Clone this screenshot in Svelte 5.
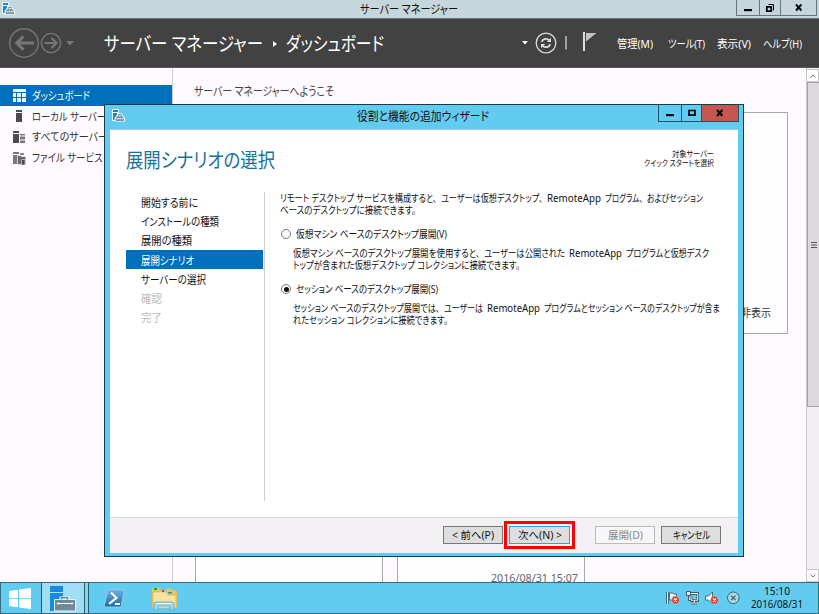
<script>
  const nav = [
    ['ダッシュボード', 58], ['ローカル サーバー', 74], ['すべてのサーバー', 76], ['ファイル サービスと', 79]
  ];
  const steps = [
    ['開始する前に', 57, ''], ['インストールの種類', 78, ''], ['展開の種類', 51, ''],
    ['展開シナリオ', 53, 'active'], ['サーバーの選択', 65, ''], ['確認', 21, 'off'], ['完了', 21, 'off']
  ];
  const menus = [['管理(M)', 36, 15], ['ツール(T)', 37, 12], ['表示(V)', 34, 12], ['ヘルプ(H)', 39, 0]];

  // Condense a run of text horizontally to its column width.
  function fit(node, width) {
    const natural = node.getBoundingClientRect().width;
    node.style.transform = `scaleX(${width / natural})`;
  }
</script>

{#snippet t(text, w)}<span class="fit" style:width="{w}px"><span use:fit={w}>{text}</span></span>{/snippet}

{#snippet serverIcon()}
  <svg width="13" height="13" viewBox="0 0 13 13">
    <path d="M0 0h7v12H0z" fill="#eef8fc" /><path d="M1 1h5v2H1zM1 4h4v7H1z" fill="#1e86cf" />
    <path d="M2.5 12.5V9l2.3-3L6 4.2h3.6L10.8 6 13 9v3.5z" fill="#f2fafd" />
    <path d="M6.4 6.8V5.6h3v1.2" fill="none" stroke="#6b8c9c" />
    <path d="M5.4 7h5l1.6 2.3V12H3.6V9.3z" fill="#7d9bab" /><path d="M3.8 9.7h8" stroke="#e6f1f5" stroke-width=".8" />
  </svg>
{/snippet}

{#snippet errorBadge()}
  <circle cx="9.5" cy="9" r="3.9" fill="#d93a32" stroke="#f3c3bd" stroke-width=".5" />
  <path d="M8 7.5l3 3m0-3l-3 3" stroke="#fff" stroke-width="1.3" />
{/snippet}

<div class="screen">
  <header class="titlebar">
    <div class="tb-icon">{@render serverIcon()}</div>
    <div class="tb-title">{@render t('サーバー マネージャー', 98)}</div>
    <div class="winbtns">
      <span style:width="22px"><svg width="10" height="10"><path d="M1 6h8v2.2H1z" /></svg></span>
      <span style:width="21px"><svg width="10" height="10" fill="none" stroke="#000"><path d="M1.8 3.8h4.4v4.4H1.8z" stroke-width="1.8" /><path d="M3.5 1.5h5v6" /></svg></span>
      <span style:width="36px"><svg width="10" height="10"><path d="M2 1.5l5.4 6M7.4 1.5L2 7.5" stroke="#000" stroke-width="1.9" /></svg></span>
    </div>
  </header>

  <div class="topbar">
    <svg class="navs" width="68" height="32" fill="none" stroke="#777">
      <circle cx="16" cy="16" r="14.3" stroke-width="1.4" /><path d="M26 16H9M15.5 9.2L8.8 16l6.7 6.8" stroke-width="3" />
      <circle cx="43" cy="16" r="9.6" stroke-width="1.4" /><path d="M36.5 16H48M43.5 11l5 5-5 5" stroke-width="2.2" />
      <path d="M58 14h8l-4 4.5z" fill="#777" stroke="none" />
    </svg>
    <div class="crumbs">
      {@render t('サーバー マネージャー', 159)}
      <svg width="4" height="6"><path d="M0 0l4 3-4 3z" fill="#fff" /></svg>
      {@render t('ダッシュボード', 98)}
    </div>
    <svg class="tools" width="78" height="32" fill="none">
      <path d="M1 14h6l-3 3.6z" fill="#fff" />
      <circle cx="25" cy="16" r="9.8" stroke="#ddd" stroke-width="1.3" />
      <path d="M20.8 14.8c1-3.2 5-4 7.6-1.4M29.2 17.2c-1 3.2-5 4-7.6 1.4" stroke="#ddd" stroke-width="1.9" />
      <path d="M30 10.8V15h-4.2zM20 21.2V17h4.2z" fill="#ddd" />
      <path d="M45 9v13.5" stroke="#bbb" stroke-width="1.6" />
      <path d="M62 5h2v19h-2z" fill="#ddd" /><path d="M65 6h10.5L65 14.5z" fill="#c4c4c4" />
    </svg>
    <nav class="menus">
      {#each menus as [label, w, gap]}<span style:margin-right="{gap}px">{@render t(label, w)}</span>{/each}
    </nav>
  </div>

  <div class="body">
    <aside>
      {#each nav as [label, w], i}
        <div class="nav-item" class:sel={i === 0}>
          <svg width="14" height="13">
            {#if i === 0}
              <path d="M1 0h13v3H1zM1 4h3v4H1zM1 9h3v4H1zM5 4h4v4H5zM5 9h4v4H5zM10 4h4v4h-4zM10 9h4v4h-4z" fill="#e9f4fc" />
            {:else if i === 1}
              <path d="M4 0h6v2H4zM4 3h6v9H4z" fill="#4b4b4b" />
            {:else}
              <path d="M1 0h6v2H1zM1 3h6v9H1z" fill={i === 2 ? '#4b4b4b' : '#777'} />
              {#if i === 2}<path d="M8 3h5v1.5H8zM8 5.5h5v3H8zM8 9.5h5V12H8z" fill="#777" />
              {:else}<path d="M8 1h4v2H8z" fill="#888" /><path d="M5.5 3.5h3l1 1h4.3v8H5.5z" fill="#666" stroke="#fff" stroke-width=".7" /><path d="M9.5 7.5H13V13H9.5z" fill="#4b4b4b" stroke="#fff" stroke-width=".5" />{/if}
            {/if}
          </svg>
          {@render t(label, w)}
        </div>
      {/each}
    </aside>
    <main>
      <h2>{@render t('サーバー マネージャーへようこそ', 140)}</h2>
      <section class="welcome">{@render t('非表示', 30)}</section>
      <div class="tiles"><div></div><div>{@render t('2016/08/31 15:07', 87)}</div></div>
    </main>
    <div class="scroll">
      <span class="arrow"><svg width="8" height="6"><path d="M1.5 4.5L4 2l2.5 2.5" fill="none" stroke="#777" /></svg></span>
      <span class="thumb"><svg width="6" height="8"><path d="M0 1.5h6M0 4h6M0 6.5h6" stroke="#555" /></svg></span>
      <span class="gap"></span>
      <span class="arrow"><svg width="8" height="6"><path d="M1.5 1.5L4 4l2.5-2.5" fill="none" stroke="#777" /></svg></span>
    </div>
  </div>

  <footer class="taskbar">
    <div class="start"><svg width="22" height="21" fill="#fff"><path d="M0 3l9-1.3v8.5H0zM10 1.5L22 0v10.2H10zM0 11h9v8.3L0 18zM10 11h12v10l-12-1.6z" /></svg></div>
    <div class="running"><svg width="26" height="26">
      <path d="M0 0h13v6H0zM0 7h13v18H0z" fill="#168be0" /><path d="M0 6.5h13" stroke="#a9def4" />
      <path d="M11 14v-2h7v2" fill="none" stroke="#e7f4fa" stroke-width="3" /><path d="M4.5 13.5h21v11.5h-21z" fill="#708996" stroke="#e2f3fa" />
      <path d="M11.5 13.5v-1.7h6v1.7" fill="none" stroke="#708996" stroke-width="1.5" /><path d="M7 17.5h16" stroke="#fff" /><path d="M8.5 16v3l-2-1.5zM21.5 16v3l2-1.5z" fill="#fff" />
    </svg></div>
    <div class="stack"></div>
    <div class="ps"><svg width="23" height="19">
      <defs><linearGradient id="psg" x2="0" y2="1"><stop stop-color="#6fb3dc" /><stop offset="1" stop-color="#1d66a3" /></linearGradient></defs>
      <path d="M5 .7h16.5L18 18H1z" fill="url(#psg)" stroke="#8ecbea" /><path d="M8 3.5l5.5 5.4-7.5 6M12 15h5" fill="none" stroke="#fff" stroke-width="2.1" />
    </svg></div>
    <div class="folder"><svg width="27" height="25">
      <path d="M1 4V1h7l2 2h6V1l10 3v17H1z" fill="#e8c363" /><path d="M2 5h14l1 3h8v13H2z" fill="#f8e49d" stroke="#d4a94c" stroke-width=".6" />
      <path d="M3 1h3v2H3z" fill="#29a33a" /><path d="M11 3h2v2h-2z" fill="#d33" /><path d="M17 5h4v1.5h-4z" fill="#2196d5" />
      <path d="M3 23v-6q0-2 2-2h16q2 0 2 2v6h-4v-4H7v4z" fill="#9ed8ef" stroke="#5ca8ce" stroke-width=".8" /><path d="M5 16.5h16" stroke="#e6f7fd" />
    </svg></div>
    <div class="tray">
      <svg width="15" height="15" fill="none"><path d="M1.5 1v12" stroke="#28434e" stroke-width="2.4" /><path d="M1.5 1v12" stroke="#fff" /><path d="M3.5 2h3l1 1h3v6h-7z" fill="#e5f3f8" stroke="#28434e" stroke-width=".7" />{@render errorBadge()}</svg>
      <svg width="15" height="15" fill="none"><path d="M4.5 2.5h7.3v6.7H5v-5M8.5 9.5v2M5 12h6" stroke="#28434e" stroke-width="2.4" /><path d="M5 2.5h6.8v6.7H5v-5M8.5 9.5v2M5 12h6" stroke="#fff" /><path d="M.5.5h4v4h-4zM2.5 4.5v5H5" fill="#dceff7" stroke="#35515d" stroke-width=".9" /></svg>
      <svg width="15" height="15" fill="none"><path d="M.5 5h3l4-4v12l-4-4h-3z" fill="#eff8fb" stroke="#35515d" stroke-width=".8" />{@render errorBadge()}</svg>
      <svg class="cross" width="15" height="15" fill="none"><circle cx="6.3" cy="6.8" r="5.8" fill="#a9d9e9" stroke="#3e606e" /><path d="M4.1 4.6l4.4 4.4m0-4.4L4.1 9" stroke="#3e606e" stroke-width="1.3" /></svg>
    </div>
    <div class="clock">{@render t('15:10', 26)}{@render t('2016/08/31', 52)}</div>
  </footer>

  <div class="dialog">
    <div class="dlg-title">
      <div class="dlg-icon">{@render serverIcon()}</div>
      <div class="dlg-name">{@render t('役割と機能の追加ウィザード', 132)}</div>
      <div class="dlg-btns">
        <span style:width="22px"><svg width="10" height="10"><path d="M1 6h8v2.2H1z" /></svg></span>
        <span style:width="20px"><svg width="10" height="10"><path d="M2 2.5h6v4.6H2z" fill="none" stroke="#000" stroke-width="1.7" /></svg></span>
        <span class="close" style:width="37px"><svg width="10" height="10"><path d="M2 2l5.4 6M7.4 2L2 8" stroke="#000" stroke-width="1.9" /></svg></span>
      </div>
    </div>
    <div class="client">
      <div class="head">
        <h1>{@render t('展開シナリオの選択', 149)}</h1>
        <div class="dest">{@render t('対象サーバー', 42)}{@render t('クイック スタートを選択', 70)}</div>
      </div>
      <div class="wizard">
        <ul>
          {#each steps as [label, w, state]}<li class={state}>{@render t(label, w)}</li>{/each}
        </ul>
        <div class="content">
          <p>{@render t('リモート デスクトップ サービスを構成すると、', 157)}{@render t('ユーザーは仮想デスクトップ、', 102)}{@render t('RemoteApp', 54)}{@render t('プログラム、', 38)}{@render t('およびセッション', 56)}</p>
          <p>{@render t('ベースのデスクトップに接続できます。', 136)}</p>
          <div class="option first"><i></i>{@render t('仮想マシン ベースのデスクトップ展開(V)', 151)}</div>
          <div class="desc">
            <p>{@render t('仮想マシン ベースのデスクトップ展開を使用すると、', 187)}{@render t('ユーザーは公開された', 81)}{@render t('RemoteApp', 53)}{@render t('プログラムと仮想デスク', 83)}</p>
            <p>{@render t('トップが含まれた仮想デスクトップ コレクションに接続できます。', 227)}</p>
          </div>
          <div class="option"><i class="on"></i>{@render t('セッション ベースのデスクトップ展開(S)', 142)}</div>
          <div class="desc">
            <p>{@render t('セッション ベースのデスクトップ展開では、', 147)}{@render t('ユーザーは', 39)}{@render t('RemoteApp', 53)}{@render t('プログラムとセッション ベースのデスクトップが含ま', 176)}</p>
            <p>{@render t('れたセッション コレクションに接続できます。', 155)}</p>
          </div>
        </div>
      </div>
      <div class="actions">
        <button>{@render t('< 前へ(P)', 42)}</button>
        <div class="mark"><button class="default">{@render t('次へ(N) >', 44)}</button></div>
        <button class="disabled">{@render t('展開(D)', 35)}</button>
        <button>{@render t('キャンセル', 37)}</button>
      </div>
    </div>
  </div>
</div>

<style>
  .screen, .screen * { box-sizing: border-box; }
  .screen { position: relative; width: 819px; height: 614px; overflow: hidden; display: flex; flex-direction: column; background: #fefaff; color: #111; font: 11px/14px "Noto Sans", "Noto Sans CJK JP", sans-serif; font-feature-settings: "palt"; }
  svg { display: block; flex: none; overflow: visible; }
  .fit { display: block; flex: none; white-space: pre; }
  .fit > span { display: inline-block; transform-origin: 0 50%; white-space: pre; }
  h1, h2, p, ul { margin: 0; padding: 0; font-weight: 400; }
  p { display: flex; gap: 4px; height: 12.3px; }

  .titlebar { height: 19px; flex: none; display: flex; background: #c5d6dd; border-bottom: 1px solid #63747b; }
  .tb-icon { width: 360px; padding: 2px 0 0 2px; }
  .tb-title { flex: 1; padding-top: 3px; font-size: 12px; }
  .winbtns { display: flex; height: 16px; border: 1px solid #68777d; border-top: 0; margin-right: 2px; }
  .winbtns span, .dlg-btns span { display: flex; align-items: center; justify-content: center; }
  .winbtns span + span { border-left: 1px solid #68777d; }

  .topbar { height: 49px; flex: none; display: flex; background: #424242; color: #fff; padding-left: 8px; border-bottom: 1px solid #5a5a5a; }
  .navs { margin-top: 8px; }
  .crumbs { display: flex; align-items: center; width: 445px; padding-left: 28px; gap: 9.5px; font-size: 19px; line-height: 28px; height: 49px; }
  .tools { margin: 8px 18px 0 0; }
  .menus { display: flex; padding-top: 18px; }

  .body { flex: 1; min-height: 0; display: flex; }
  aside { width: 173px; flex: none; padding-top: 17px; border-right: 1.5px solid #cfcbd1; overflow: hidden; }
  .nav-item { height: 20.8px; display: flex; align-items: center; gap: 6px; padding: 1px 0 0 12px; color: #333; }
  .nav-item.sel { background: #0070bd; color: #fff; }
  main { flex: 1; padding-left: 22px; overflow: hidden; display: flex; flex-direction: column; }
  h2 { height: 44px; flex: none; padding-top: 16px; margin-left: -1px; color: #444; font-size: 12px; line-height: 15px; }
  .welcome { width: 593px; height: 222px; flex: none; border: 1px solid #aaa6ac; background: #fefdff; display: flex; justify-content: flex-end; align-items: flex-end; padding: 0 16px 13px 0; color: #333; }
  .tiles { flex: 1; margin-top: 20px; display: flex; gap: 14px; min-height: 0; }
  .tiles div { width: 188px; border: 1px solid #aaa6ac; border-bottom: 0; background: #fefdff; display: flex; flex-direction: column; justify-content: flex-end; align-items: flex-end; padding-right: 6px; color: #666; font-size: 10.5px; overflow: hidden; }
  .tiles .fit { margin-bottom: -3px; }
  .scroll { width: 13px; flex: none; display: flex; flex-direction: column; background: #f2eff3; border-left: 1px solid #cac7cb; padding-top: 1px; }
  .scroll span { display: flex; align-items: center; justify-content: center; }
  .arrow { height: 13px; background: #fff; border: 1px solid #cac7cb; border-left: 0; }
  .thumb { height: 325px; background: #dbd9dc; border: 1px solid #a6a4a7; border-right: 0; }
  .gap { flex: 1; }

  .taskbar { height: 32px; flex: none; display: flex; background: #62cbf0; border: 1px solid #386b80; }
  .start { width: 40px; padding: 5px 0 0 8px; }
  .running { width: 44px; padding: 3px 0 0 8px; background: #a1def6; border: solid #28566b; border-width: 0 1px; }
  .stack { width: 4px; background: #86d6f3; border-right: 1px solid #28566b; }
  .ps { width: 61px; padding: 6px 0 0 14px; }
  .folder { flex: 1; padding: 4px 0 0 1px; }
  .tray { display: flex; gap: 4.5px; padding-top: 8px; width: 85px; }
  .cross { margin-left: 2px; }
  .clock { width: 52px; margin-right: 15px; display: flex; flex-direction: column; align-items: center; font-size: 10px; line-height: 13px; padding-top: 2px; }

  .dialog { position: absolute; left: 104px; top: 104px; width: 640px; height: 453px; border: 1px solid #173b49; background: #62cbf0; padding: 0 5px 5px; display: flex; flex-direction: column; }
  .dlg-title { height: 24px; flex: none; display: flex; }
  .dlg-icon { width: 247px; padding: 4px 0 0 2px; }
  .dlg-name { flex: 1; padding-top: 5px; font-size: 12px; }
  .dlg-btns { display: flex; height: 17px; border: 1px solid #245264; border-top: 0; margin-right: -1px; }
  .dlg-btns span + span { border-left: 1px solid #245264; }
  .dlg-btns .close { background: #c7564f; }
  .client { flex: 1; background: #fff; border-top: 1px solid #9fcbdc; display: flex; flex-direction: column; }
  .head { height: 62px; display: flex; justify-content: space-between; padding: 17px 24px 0 16px; }
  h1 { color: #1a7096; font-size: 20px; line-height: 26px; font-family: "Noto Sans CJK JP", sans-serif; }
  .dest { display: flex; flex-direction: column; align-items: flex-end; font-size: 8.5px; line-height: 9px; padding-top: 2px; }
  .wizard { height: 325px; display: flex; }
  ul { width: 139px; height: 309px; list-style: none; margin-left: 16px; padding-right: 1px; border-right: 1px solid #cfcfcf; }
  li { height: 19.2px; padding: 4px 0 0 15px; }
  li.active { background: #0070bd; color: #fff; }
  li.off { color: #bbb; }
  .content { padding: 0 0 0 15px; font-size: 10px; line-height: 12px; }
  .option { display: flex; align-items: center; gap: 5px; height: 14px; margin: 10.5px 0 6px; font-size: 10.5px; }
  .option.first { margin-top: 10px; }
  .option i { width: 10px; height: 10px; margin-left: 1px; border: 1px solid #777; border-radius: 50%; background: #fff; padding: 1.5px; }
  .option i.on { background: #111 content-box; }
  .desc { padding-left: 13px; }
  .actions { height: 36px; margin-top: auto; flex: none; background: #f4f1f5; border-top: 1px solid #dedbe0; display: flex; align-items: center; padding: 0 0 1px 333px; }
  button { width: 60px; height: 18px; padding: 0; border: 1px solid #777; background: #dedede; font: inherit; font-size: 10.5px; font-feature-settings: inherit; line-height: 14px; color: #111; display: flex; align-items: center; justify-content: center; }
  .mark { border: 3px solid #f00; padding: 2px; width: 71px; height: 28px; margin: 0 20px 0 1px; }
  .default { width: 61px; border: 1.5px solid #3f98e8; }
  .disabled { background: #f7f6f8; border-color: #bbb; color: #888; margin-right: 6px; }
</style>
